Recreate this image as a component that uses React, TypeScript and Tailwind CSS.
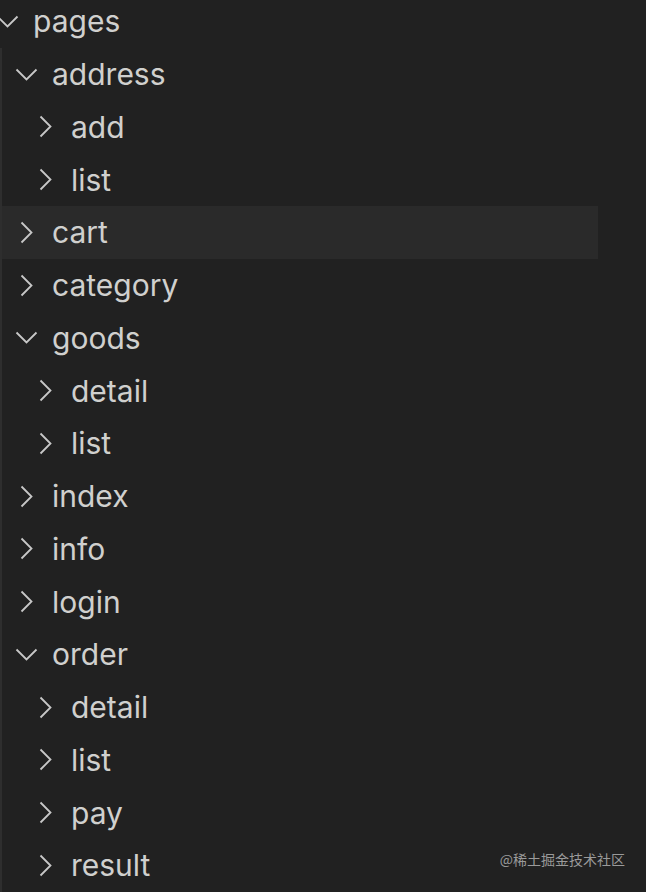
import React from "react";

type Node = {
  name: string;
  level: number;
  open?: boolean;
  hover?: boolean;
};

const nodes: Node[] = [
  {name: "address", level: 1, open: true},
  {name: "add", level: 2},
  {name: "list", level: 2},
  {name: "cart", level: 1, hover: true},
  {name: "category", level: 1},
  {name: "goods", level: 1, open: true},
  {name: "detail", level: 2},
  {name: "list", level: 2},
  {name: "index", level: 1},
  {name: "info", level: 1},
  {name: "login", level: 1},
  {name: "order", level: 1, open: true},
  {name: "detail", level: 2},
  {name: "list", level: 2},
  {name: "pay", level: 2},
  {name: "result", level: 2},
];

function Chevron({open}: {open?: boolean}) {
  return (
    <span className="flex w-[28px] shrink-0 items-center justify-center">
      {open ? (
        <svg width="23" height="13" viewBox="0 0 23 13" fill="none">
          <polyline points="1.5,1.5 11.5,11.5 21.5,1.5" stroke="#c8c8c8" strokeWidth="1.8" />
        </svg>
      ) : (
        <svg width="13" height="23" viewBox="0 0 13 23" fill="none">
          <polyline points="1.5,1.5 11.5,11.5 1.5,21.5" stroke="#c8c8c8" strokeWidth="1.8" />
        </svg>
      )}
    </span>
  );
}

function Row({node, offset}: {node: Node; offset: number}) {
  return (
    <div
      className={`flex h-[52.75px] w-[596px] items-center ${node.hover ? "bg-[#2a2a2a]" : ""}`}
      style={{paddingLeft: node.level * 19 - 7 - offset}}
    >
      <Chevron open={node.open} />
      <span className="ml-[12px] text-[30px] leading-none text-[#d0d0ce]">{node.name}</span>
    </div>
  );
}

export default function App() {
  return (
    <div
      className="relative h-[892px] w-[646px] overflow-hidden bg-[#212121]"
      style={{fontFamily: "Inter, 'Noto Sans', sans-serif"}}
    >
      <div className="mt-[-5px]">
        <div className="flex h-[52.75px] items-center -ml-[7px]">
          <Chevron open />
          <span className="ml-[12px] text-[30px] leading-none text-[#d0d0ce]">pages</span>
        </div>
        <div className="border-l-2 border-[#2e2e2e]">
          {nodes.map((node, i) => (
            <Row key={i} node={node} offset={2} />
          ))}
        </div>
      </div>
      <div
        className="absolute bottom-[22px] right-[21px] text-[14px] text-[#9a9a9a]"
        style={{fontFamily: "'Noto Sans CJK SC', 'Noto Sans', sans-serif"}}
      >
        @稀土掘金技术社区
      </div>
    </div>
  );
}
